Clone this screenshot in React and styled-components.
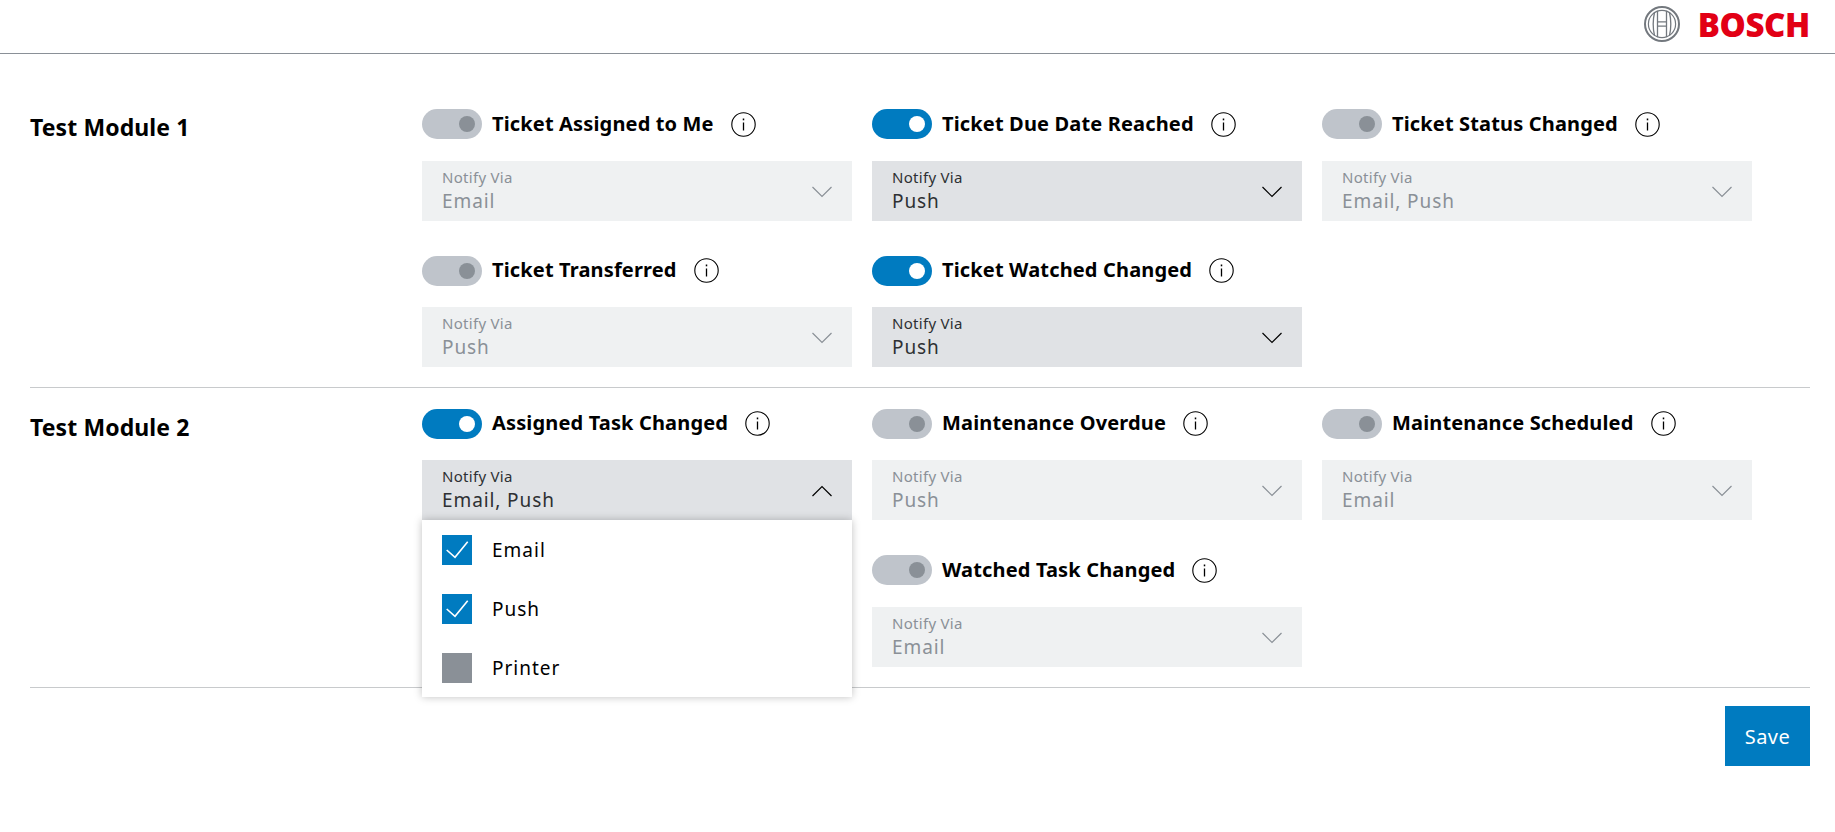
import React from "react";
import styled, { createGlobalStyle } from "styled-components";

const FONT = `"Noto Sans", "Open Sans", sans-serif`;

const GlobalStyle = createGlobalStyle`
  html, body {
    margin: 0;
    padding: 0;
    background: #fff;
    font-family: ${FONT};
    color: #000;
  }
  * {
    box-sizing: border-box;
  }
`;

const Header = styled.header`
  height: 54px;
  border-bottom: 1px solid #8a9097;
  display: flex;
  align-items: center;
  justify-content: flex-end;
  gap: 18px;
  padding: 0 25px 5px 0;
`;

const Wordmark = styled.span`
  font-family: "Open Sans", sans-serif;
  font-weight: 800;
  font-size: 33px;
  line-height: 1;
  color: #e20015;
  letter-spacing: -0.4px;
`;

const Main = styled.main`
  padding: 0 25px 0 30px;
`;

const Module = styled.section`
  display: flex;
  padding: ${({ $first }) => ($first ? "55px 0 20px" : "20.5px 0 20px")};
  border-bottom: 1px solid #c8cacc;
`;

const ModuleTitle = styled.h2`
  width: 392px;
  flex: none;
  margin: 0;
  padding-top: 3px;
  font-size: 23px;
  line-height: 31px;
  font-weight: 700;
  letter-spacing: 0.1px;
`;

const Grid = styled.div`
  display: grid;
  grid-template-columns: repeat(3, 430px);
  column-gap: 20px;
  row-gap: 35px;
`;

const Item = styled.div`
  display: flex;
  flex-direction: column;
  gap: 21.5px;
`;

const ItemHead = styled.div`
  display: flex;
  align-items: center;
  height: 30px;
`;

const Toggle = styled.span`
  width: 60px;
  height: 30px;
  flex: none;
  border-radius: 15px;
  background: ${({ $on }) => ($on ? "#007bc0" : "#bfc4cb")};
  display: flex;
  align-items: center;
  justify-content: flex-end;
  padding-right: 7px;

  &::after {
    content: "";
    width: 16px;
    height: 16px;
    border-radius: 50%;
    background: ${({ $on }) => ($on ? "#fff" : "#8a9097")};
  }
`;

const ItemName = styled.span`
  margin: 0 17px 0 10px;
  font-size: 20px;
  line-height: 28px;
  padding-bottom: 1px;
  font-weight: 700;
  letter-spacing: 0.15px;
  white-space: nowrap;
`;

const SelectWrap = styled.div`
  position: relative;
`;

const SelectBox = styled.div`
  height: 60px;
  padding: 6px 20px 0;
  background: ${({ $on }) => ($on ? "#e0e2e5" : "#eff1f2")};
  color: ${({ $on }) => ($on ? "#2e3033" : "#8a9097")};
  display: flex;
  justify-content: space-between;
`;

const SelectText = styled.div`
  display: flex;
  flex-direction: column;
`;

const SelectLabel = styled.span`
  font-size: 15px;
  line-height: 21px;
  letter-spacing: 0.3px;
`;

const SelectValue = styled.span`
  font-size: 19px;
  line-height: 27px;
  letter-spacing: 0.9px;
`;

const Chevron = styled.svg`
  width: 20px;
  height: 12px;
  margin-top: 19px;
  fill: none;
  stroke: ${({ $on }) => ($on ? "#000" : "#8a9097")};
  stroke-width: 1.2;
`;

const Menu = styled.div`
  position: absolute;
  top: 60px;
  left: 0;
  right: 0;
  z-index: 2;
  height: 177px;
  padding: 15px 20px 0;
  background: #fff;
  box-shadow: 0 0 8px rgba(0, 0, 0, 0.25);
  display: flex;
  flex-direction: column;
  gap: 29px;
`;

const MenuRow = styled.div`
  display: flex;
  align-items: center;
  gap: 20px;
  font-size: 19px;
  letter-spacing: 1px;
  height: 30px;
`;

const CheckBox = styled.span`
  width: 30px;
  height: 30px;
  flex: none;
  background: ${({ $checked }) => ($checked ? "#007bc0" : "#8a9097")};
  display: flex;
  align-items: center;
  justify-content: center;
`;

const Footer = styled.div`
  display: flex;
  justify-content: flex-end;
  padding-top: 18.5px;
`;

const SaveButton = styled.button`
  width: 85px;
  height: 60px;
  border: none;
  border-radius: 0;
  background: #007bc0;
  color: #fff;
  font-family: ${FONT};
  font-size: 20px;
  letter-spacing: 0.5px;
  cursor: pointer;
`;

const BoschMark = () => (
  <svg width="36" height="36" viewBox="0 0 36 36" fill="none" stroke="#73787e">
    <circle cx="18" cy="18" r="17" strokeWidth="2" />
    <circle cx="18" cy="18" r="13.6" strokeWidth="1.2" />
    <path
      d="M10.5 6.5c-1.6 7-1.6 16 0 23M13.5 4.8v26.4M22.5 4.8v26.4M25.5 6.5c1.6 7 1.6 16 0 23M13.5 15.8h9M13.5 20.2h9"
      strokeWidth="1.3"
    />
  </svg>
);

const InfoIcon = () => (
  <svg width="25" height="25" viewBox="0 0 25 25" fill="none" stroke="#000">
    <circle cx="12.5" cy="12.5" r="11.7" strokeWidth="1.1" />
    <path d="M12.5 10.5v8" strokeWidth="1.3" />
    <path d="M12.5 6.5v1.8" strokeWidth="1.5" />
  </svg>
);

const modules = [
  {
    title: "Test Module 1",
    items: [
      { name: "Ticket Assigned to Me", value: "Email" },
      { name: "Ticket Due Date Reached", value: "Push", on: true },
      { name: "Ticket Status Changed", value: "Email, Push" },
      { name: "Ticket Transferred", value: "Push" },
      { name: "Ticket Watched Changed", value: "Push", on: true },
    ],
  },
  {
    title: "Test Module 2",
    items: [
      { name: "Assigned Task Changed", value: "Email, Push", on: true, open: true },
      { name: "Maintenance Overdue", value: "Push" },
      { name: "Maintenance Scheduled", value: "Email" },
      { name: "", hidden: true },
      { name: "Watched Task Changed", value: "Email" },
    ],
  },
];

const menuOptions = [
  { label: "Email", checked: true },
  { label: "Push", checked: true },
  { label: "Printer", checked: false },
];

const NotifyItem = ({ item }) => {
  if (item.hidden) return <div />;

  return (
    <Item>
      <ItemHead>
        <Toggle $on={item.on} />
        <ItemName>{item.name}</ItemName>
        <InfoIcon />
      </ItemHead>
      <SelectWrap>
        <SelectBox $on={item.on}>
          <SelectText>
            <SelectLabel>Notify Via</SelectLabel>
            <SelectValue>{item.value}</SelectValue>
          </SelectText>
          <Chevron $on={item.on} viewBox="0 0 20 12">
            <path d={item.open ? "M0.5 11 10 1.5 19.5 11" : "M0.5 1 10 10.5 19.5 1"} />
          </Chevron>
        </SelectBox>
        {item.open && (
          <Menu>
            {menuOptions.map((opt) => (
              <MenuRow key={opt.label}>
                <CheckBox $checked={opt.checked}>
                  {opt.checked && (
                    <svg width="30" height="30" viewBox="0 0 30 30" fill="none" stroke="#fff" strokeWidth="1.6">
                      <path d="M4.7 15 13 22.3 25.7 6.7" />
                    </svg>
                  )}
                </CheckBox>
                {opt.label}
              </MenuRow>
            ))}
          </Menu>
        )}
      </SelectWrap>
    </Item>
  );
};

export default function App() {
  return (
    <>
      <GlobalStyle />
      <Header>
        <BoschMark />
        <Wordmark>BOSCH</Wordmark>
      </Header>
      <Main>
        {modules.map((mod, i) => (
          <Module key={mod.title} $first={i === 0}>
            <ModuleTitle>{mod.title}</ModuleTitle>
            <Grid>
              {mod.items.map((item, j) => (
                <NotifyItem key={j} item={item} />
              ))}
            </Grid>
          </Module>
        ))}
        <Footer>
          <SaveButton>Save</SaveButton>
        </Footer>
      </Main>
    </>
  );
}
